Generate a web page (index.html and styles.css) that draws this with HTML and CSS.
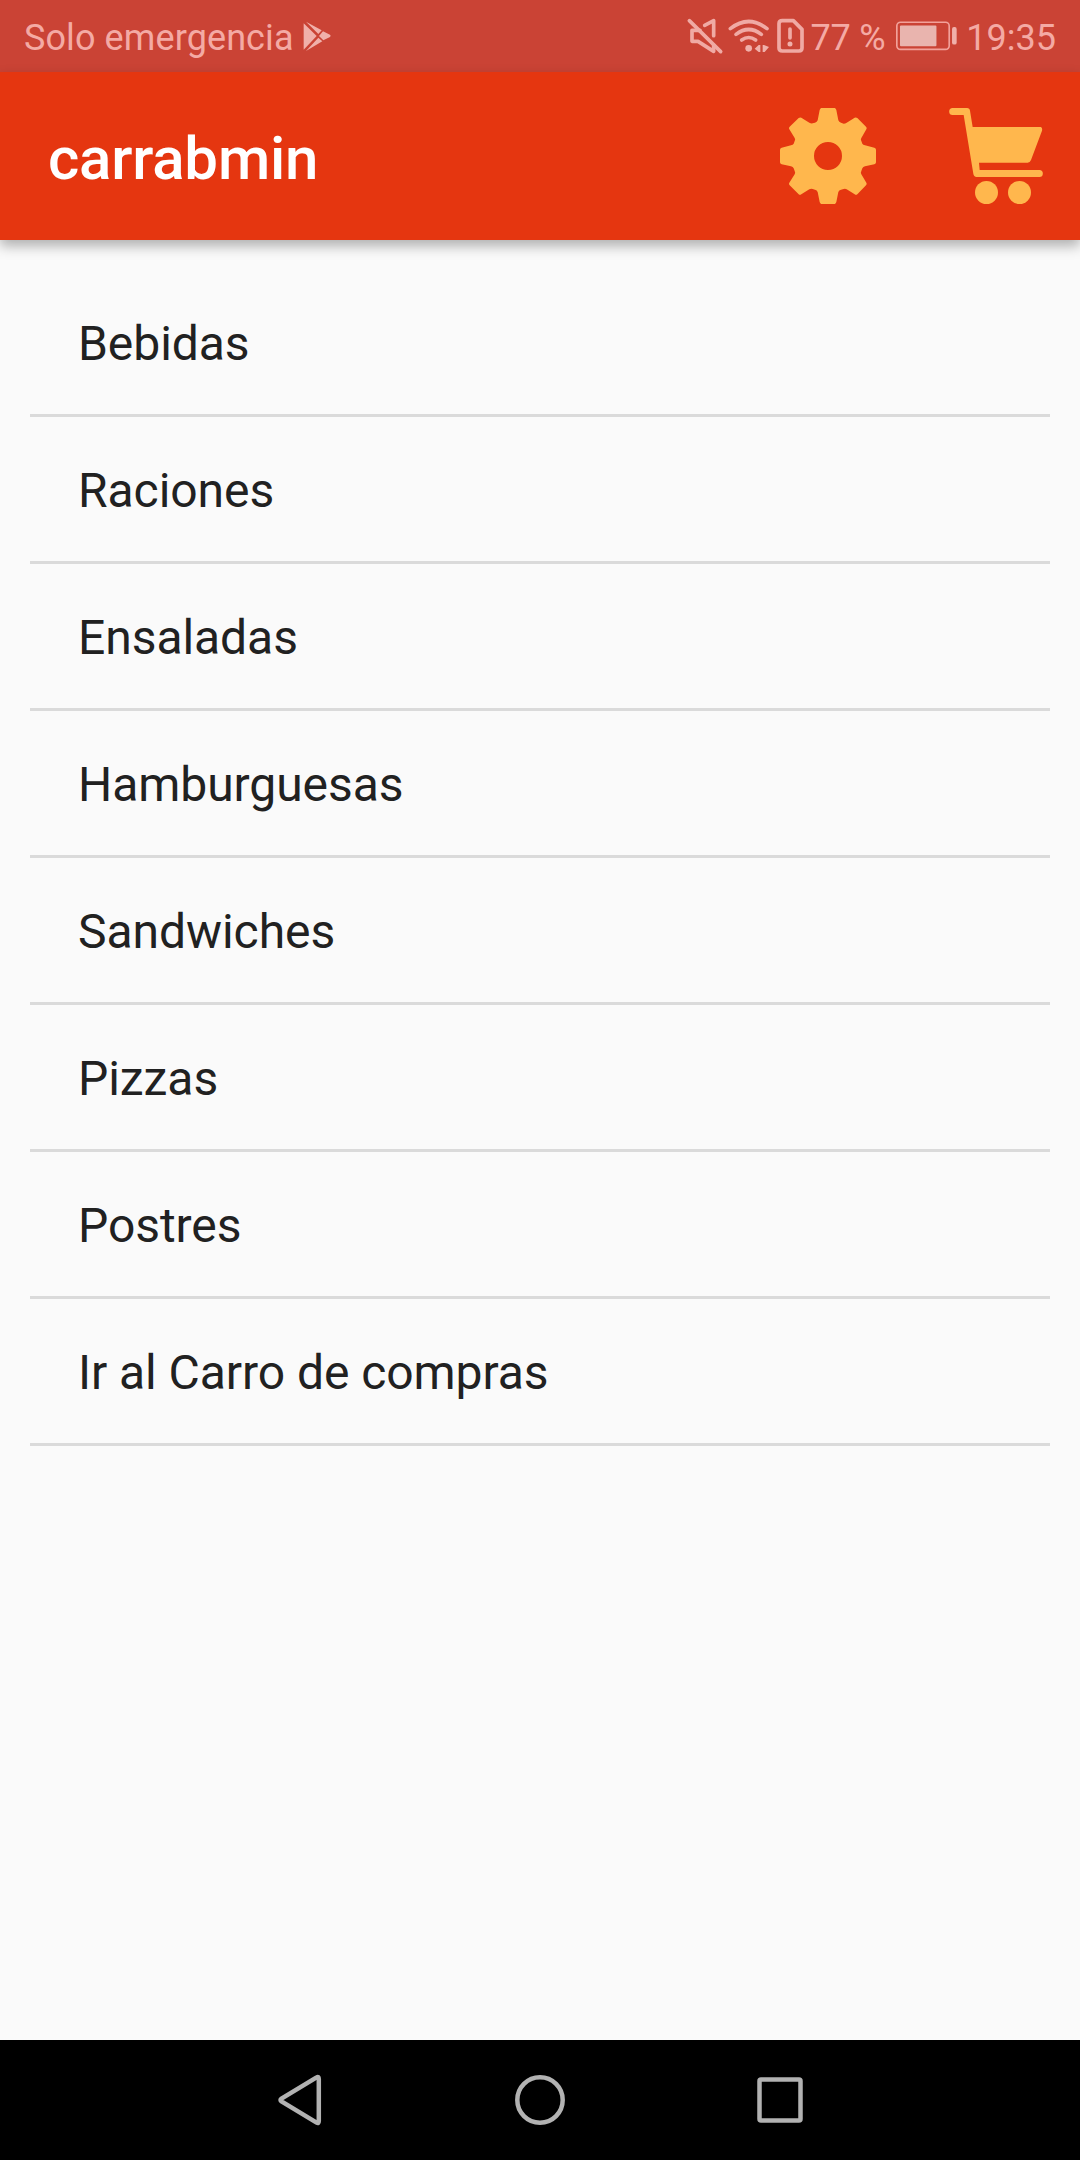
FILE: index.html
```html
<!DOCTYPE html>
<html lang="es">
<head>
<meta charset="utf-8">
<title>carrabmin</title>
<link rel="stylesheet" href="styles.css">
</head>
<body>
<div class="screen">
  <div class="status-bar">
    <span class="carrier">Solo emergencia</span>
    <svg class="icon-play" viewBox="908 64 84 90">
      <path d="M910 71 L949 109 L910 150Z M917 66 L964 92 L954 103Z M968 95 L989 105 Q993 108 989 112 L969 122 L956 109Z M954 114 L966 125 L917 154Z"/>
    </svg>
    <div class="status-right">
      <svg class="icon-mute" viewBox="54 58 102 102">
        <g class="line"><path d="M58 63 L152 156"/><path d="M104 77 L131 63 V108"/><path d="M90 92 H66 V125 H84 L131 155 V136"/></g>
      </svg>
      <svg class="icon-wifi" viewBox="178 56 120 102">
        <g class="line"><path d="M182 85 Q237 42 292 85"/><path d="M199 102 Q237 73 275 102"/><path d="M216 119 Q237 104 258 119"/></g>
        <circle cx="237" cy="144" r="10"/>
        <path d="M255 145 L267 134 H272 V155 H267Z M279 134 H283 L298 140 L285 155 H279Z"/>
      </svg>
      <svg class="icon-sim" viewBox="326 56 81 102">
        <path class="line" d="M342 61 H375 L401 87 V143 Q401 152 392 152 H342 Q332 152 332 143 V70 Q332 61 342 61Z"/>
        <path class="line" d="M365 86 V113"/><circle cx="365" cy="131" r="7.5"/>
      </svg>
      <span class="percent">77 %</span>
      <svg class="icon-battery" viewBox="107 65 184 90">
        <rect class="case" x="109.500" y="68.500" width="158" height="82" rx="11"/>
        <rect class="level" x="119" y="78" width="110" height="63" rx="3"/>
        <rect x="276" y="83" width="14" height="53" rx="6"/>
      </svg>
      <span class="clock">19:35</span>
    </div>
  </div>
  <header class="app-bar">
    <h1 class="title">carrabmin</h1>
    <svg class="icon-gear" viewBox="60 54 288 288">
      <path fill-rule="evenodd" d="M184 54 H224 Q228 55 229 60 L235 91 Q237 97 243 98 L251 101 Q256 101 260 98 L284 83 Q288 81 292 84 L318 110 Q322 114 319 118 L304 144 Q301 149 304 153 L307 161 Q309 165 315 166 L343 173 Q348 175 348 179 V217 Q348 221 343 223 L315 229 Q309 230 307 235 L304 243 Q301 248 304 253 L319 278 Q322 282 318 286 L292 313 Q288 316 284 313 L260 298 Q256 295 251 297 L243 299 Q237 300 235 306 L229 336 Q228 341 224 342 H184 Q180 341 179 336 L173 306 Q171 300 165 299 L158 297 Q153 295 148 298 L124 313 Q120 316 116 313 L89 286 Q85 282 88 278 L104 253 Q107 248 104 243 L101 235 Q99 230 93 229 L65 223 Q60 221 60 217 V179 Q60 175 65 173 L93 166 Q99 165 101 161 L104 153 Q107 149 104 144 L88 118 Q85 114 89 110 L116 84 Q120 81 124 83 L148 98 Q153 101 158 100 L165 98 Q171 97 173 91 L179 60 Q180 55 184 54Z M204 156 A42 42 0 1 0 204 240 A42 42 0 1 0 204 156Z"/>
    </svg>
    <svg class="icon-cart" viewBox="567 54 282 288">
      <path fill-rule="evenodd" d="M578 54 H621 Q629 54 630 62 L638 111 H842 Q848 113 846 122 L813 210 Q810 218 803 218 H657 L659 240 H838 A10.500 10.500 0 0 1 838 261 H650 Q641 260 640 251 L611 75 H578 A10.500 10.500 0 0 1 578 54Z"/>
      <circle cx="679.500" cy="307.500" r="34.500"/><circle cx="778.500" cy="307.500" r="34.500"/>
    </svg>
  </header>
  <main class="content">
    <ul class="menu">
      <li class="menu-item">Bebidas</li>
      <li class="menu-item">Raciones</li>
      <li class="menu-item">Ensaladas</li>
      <li class="menu-item">Hamburguesas</li>
      <li class="menu-item">Sandwiches</li>
      <li class="menu-item">Pizzas</li>
      <li class="menu-item">Postres</li>
      <li class="menu-item">Ir al Carro de compras</li>
    </ul>
  </main>
  <nav class="nav-bar">
    <svg class="nav-icon" viewBox="0 0 60 60"><path d="M46.600 7.400 Q48.800 6 48.800 9 V51 Q48.800 54 46.600 52.600 L11.500 31.500 Q9.500 30 11.500 28.500Z"/></svg>
    <svg class="nav-icon" viewBox="0 0 60 60"><circle cx="30" cy="30" r="22.700"/></svg>
    <svg class="nav-icon" viewBox="0 0 60 60"><rect x="9.500" y="9.500" width="41" height="41" rx="1.500"/></svg>
  </nav>
</div>
</body>
</html>
```
FILE: styles.css
```css
* { box-sizing: border-box; }
body { margin: 0; font-family: Roboto, sans-serif; }
svg { display: block; flex: none; overflow: visible; }

.screen {
  width: 1080px;
  height: 2160px;
  display: flex;
  flex-direction: column;
  background: #fafafa;
  overflow: hidden;
}

.status-bar {
  flex: none;
  height: 72px;
  padding: 0 24px;
  display: flex;
  align-items: center;
  background: #ca4335;
  color: #f4aaa4;
  fill: #f0b0aa;
  font-size: 36px;
  line-height: 42px;
  white-space: nowrap;
}
.carrier, .percent, .clock { padding-top: 4px; }
.carrier { letter-spacing: 0.1px; }
.percent { letter-spacing: -0.2px; }
.status-right { display: flex; align-items: center; margin-left: auto; }
.line { fill: none; stroke: #f0aaa4; stroke-width: 11; stroke-linecap: round; stroke-linejoin: round; }
.icon-play { width: 28px; height: 30px; margin-left: 9px; }
.icon-mute { width: 34px; height: 34px; margin-right: 7px; }
.icon-wifi { width: 40px; height: 34px; margin-right: 8px; }
.icon-sim { width: 27px; height: 34px; margin-right: 6px; }
.icon-battery { width: 61px; height: 30px; margin: 0 9px 0 11px; }
.case { fill: none; stroke: #f2a19a; stroke-width: 5; }
.level { fill: #e9b4ae; }

.app-bar {
  flex: none;
  position: relative;
  height: 168px;
  padding: 0 37px 0 48px;
  display: flex;
  align-items: center;
  background: #e53610;
  fill: #ffb74d;
  box-shadow: 0 6px 12px rgba(0, 0, 0, 0.3);
}
.title {
  margin: 0 auto 0 0;
  padding-top: 6px;
  color: #fff;
  font-size: 60px;
  font-weight: 500;
  line-height: 70px;
  letter-spacing: -0.2px;
}
.icon-gear { width: 96px; height: 96px; margin-right: 73px; }
.icon-cart { width: 94px; height: 96px; }

.content { flex: 1; padding: 30px; }
.menu { margin: 0; padding: 0; list-style: none; }
.menu-item {
  height: 147px;
  padding: 2px 48px 0;
  border-bottom: 3px solid #dadada;
  color: #212121;
  font-size: 48px;
  line-height: 144px;
  letter-spacing: -0.06px;
}

.nav-bar {
  flex: none;
  height: 120px;
  display: flex;
  align-items: center;
  justify-content: center;
  gap: 180px;
  background: #000;
}
.nav-icon {
  width: 60px;
  height: 60px;
  fill: none;
  stroke: #b2b2b2;
  stroke-width: 4.500;
}
```
